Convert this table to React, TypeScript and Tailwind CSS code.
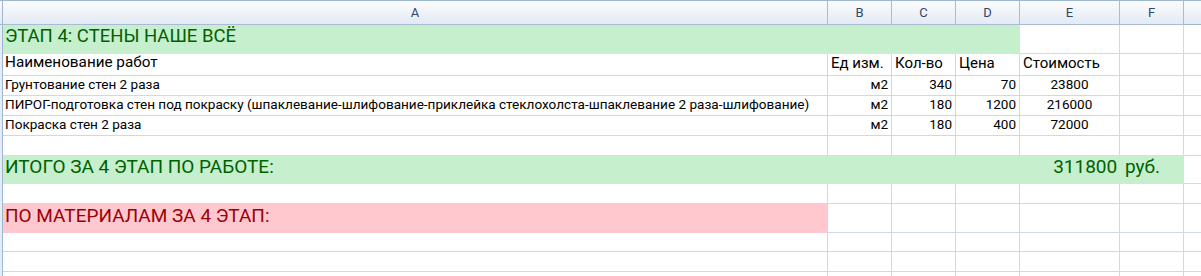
import React from 'react'

// Column widths include the right gridline (border-box)
const wA = 'w-[825px]'
const wB = 'w-[64px]'
const wE = 'w-[100px]'

const font = { fontFamily: 'Roboto, "Noto Sans", sans-serif' }

const Stub = () => <div className="w-[3px] shrink-0 bg-[#e4ecf7] border-r border-[#9eb6ce]" />

const Row = ({ h, children }: { h: string; children?: React.ReactNode }) => (
  <div className={`flex ${h}`}>
    <Stub />
    {children}
    <div className="flex-1 border-b border-[#d0d7e5]" />
  </div>
)

const Cell = ({ w, className = '', children }: { w: string; className?: string; children?: React.ReactNode }) => (
  <div className={`${w} shrink-0 flex items-end overflow-visible whitespace-nowrap border-r border-b border-[#d0d7e5] pb-[1px] ${className}`}>
    {children}
  </div>
)

const works = [
  { name: 'Грунтование стен 2 раза', unit: 'м2', qty: 340, price: 70 },
  {
    name: 'ПИРОГ-подготовка стен под покраску (шпаклевание-шлифование-приклейка стеклохолста-шпаклевание 2 раза-шлифование)',
    unit: 'м2',
    qty: 180,
    price: 1200,
  },
  { name: 'Покраска стен 2 раза', unit: 'м2', qty: 180, price: 400 },
]

const EmptyCells = () => (
  <>
    <Cell w={wA} />
    <Cell w={wB} />
    <Cell w={wB} />
    <Cell w={wB} />
    <Cell w={wE} />
    <Cell w={wB} />
  </>
)

export default function App() {
  const total = works.reduce((s, r) => s + r.qty * r.price, 0)

  return (
    <div className="w-[1201px] h-[276px] overflow-hidden bg-white text-black" style={font}>
      {/* Column headers */}
      <div className="flex h-[25px] border-t border-[#9eb6ce] bg-gradient-to-b from-[#fbfcfe] to-[#e2e9f3] text-[13px] text-[#2f4868]">
        <div className="w-[3px] shrink-0 border-r border-b border-[#9eb6ce]" />
        {[
          ['A', wA],
          ['B', wB],
          ['C', wB],
          ['D', wB],
          ['E', wE],
          ['F', wB],
        ].map(([l, w]) => (
          <div key={l} className={`${w} shrink-0 flex items-center justify-center border-r border-b border-[#a9bcd4]`}>
            {l}
          </div>
        ))}
        <div className="flex-1 border-b border-[#9eb6ce]" />
      </div>

      {/* Row 1 - stage title */}
      <Row h="h-[29px]">
        <div className="w-[1017px] shrink-0 flex items-end bg-[#c6efce] border-r border-b border-[#c6efce] pl-[2px] pb-[2px] text-[18.5px] text-[#006100]">
          ЭТАП 4: СТЕНЫ НАШЕ ВСЁ
        </div>
        <Cell w={wE} />
        <Cell w={wB} />
      </Row>

      {/* Row 2 - table head */}
      <Row h="h-[22px]">
        <Cell w={wA} className="pl-[2px] text-[15.25px]">Наименование работ</Cell>
        <Cell w={wB} className="pl-[3px] text-[15px]">Ед изм.</Cell>
        <Cell w={wB} className="pl-[3px] text-[15px]">Кол-во</Cell>
        <Cell w={wB} className="pl-[3px] text-[15px]">Цена</Cell>
        <Cell w={wE} className="pl-[3px] text-[15px]">Стоимость</Cell>
        <Cell w={wB} />
      </Row>

      {works.map((r) => (
        <Row key={r.name} h="h-[20px]">
          <Cell w={wA} className="pl-[2px] text-[13.55px]">{r.name}</Cell>
          <Cell w={wB} className="justify-end pr-[3px] text-[13.5px]">{r.unit}</Cell>
          <Cell w={wB} className="justify-end pr-[3px] text-[13.5px]">{r.qty}</Cell>
          <Cell w={wB} className="justify-end pr-[3px] text-[13.5px]">{r.price}</Cell>
          <Cell w={wE} className="justify-center text-[13.5px]">{r.qty * r.price}</Cell>
          <Cell w={wB} />
        </Row>
      ))}

      {/* Row 6 - empty, bottom line hidden under green fill */}
      <Row h="h-[20px]">
        <Cell w={wA} className="border-b-[#c6efce]" />
        <Cell w={wB} className="border-b-[#c6efce]" />
        <Cell w={wB} className="border-b-[#c6efce]" />
        <Cell w={wB} className="border-b-[#c6efce]" />
        <Cell w={wE} className="border-b-[#c6efce]" />
        <Cell w={wB} className="border-b-[#c6efce]" />
      </Row>

      {/* Row 7 - total */}
      <Row h="h-[28px]">
        <div className="w-[1181px] shrink-0 flex items-end justify-between bg-[#c6efce] border-r border-b border-[#c6efce] pl-[2px] pr-[23px] pb-[2px] text-[19px] text-[#006100]">
          <span>ИТОГО ЗА 4 ЭТАП ПО РАБОТЕ:</span>
          <span className="[word-spacing:3px]">{total} руб.</span>
        </div>
      </Row>

      {/* Row 8 - empty */}
      <Row h="h-[20px]">
        <Cell w={wA} className="border-b-[#ffc7ce]" />
        <Cell w={wB} />
        <Cell w={wB} />
        <Cell w={wB} />
        <Cell w={wE} />
        <Cell w={wB} />
      </Row>

      {/* Row 9 - materials */}
      <Row h="h-[29px]">
        <div className={`${wA} shrink-0 flex items-end bg-[#ffc7ce] border-r border-b border-[#ffc7ce] pl-[2px] pb-[2px] text-[19px] text-[#9c0006]`}>
          ПО МАТЕРИАЛАМ ЗА 4 ЭТАП:
        </div>
        <Cell w={wB} />
        <Cell w={wB} />
        <Cell w={wB} />
        <Cell w={wE} />
        <Cell w={wB} />
      </Row>

      <Row h="h-[19px]">
        <EmptyCells />
      </Row>
      <Row h="h-[20px]">
        <EmptyCells />
      </Row>
      <Row h="h-[20px]">
        <EmptyCells />
      </Row>
    </div>
  )
}
